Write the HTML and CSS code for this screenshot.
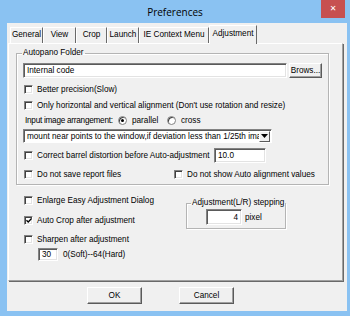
FILE: index.html
```html
<!DOCTYPE html>
<html>
<head>
<meta charset="utf-8">
<title>Preferences</title>
<link rel="stylesheet" href="styles.css">
</head>
<body>
<div class="window">
  <div class="titlebar">
    <span></span>
    <span class="title">Preferences</span>
    <span class="close">✕</span>
  </div>
  <div class="client">
    <div class="tabs">
      <div class="tab t-general">General</div>
      <div class="tab t-view">View</div>
      <div class="tab t-crop">Crop</div>
      <div class="tab t-launch">Launch</div>
      <div class="tab t-ie">IE Context Menu</div>
      <div class="tab t-adj active">Adjustment</div>
    </div>
    <div class="panel">
      <fieldset class="group main-group">
        <legend>Autopano Folder</legend>
        <div class="row row-input">
          <div class="field folder">Internal code</div>
          <div class="btn browse">Brows...</div>
        </div>
        <div class="row cb first"><span class="box"></span>Better precision(Slow)</div>
        <div class="row cb"><span class="box"></span>Only horizontal and vertical alignment (Don't use rotation and resize)</div>
        <div class="row radio-row">
          <span class="radio-label">Input image arrangement:</span>
          <span class="opt opt-parallel"><span class="radio on"></span>parallel</span>
          <span class="opt"><span class="radio"></span>cross</span>
        </div>
        <div class="row combo">
          <span class="combo-text">mount near points to the window,if deviation less than 1/25th image</span>
          <span class="combo-btn"><svg width="7" height="4" viewBox="0 0 7 4"><path d="M0 0H7L3.5 4Z" fill="#000"/></svg></span>
        </div>
        <div class="row barrel">
          <span class="cb-inline w-barrel"><span class="box"></span>Correct barrel distortion before Auto-adjustment</span>
          <div class="field small-field">10.0</div>
        </div>
        <div class="row cb-pair">
          <span class="cb-inline w-save"><span class="box"></span>Do not save report files</span>
          <span class="cb-inline"><span class="box"></span>Do not show Auto alignment values</span>
        </div>
      </fieldset>
      <div class="lower">
        <div class="left-col">
          <div class="row cb tall"><span class="box"></span>Enlarge Easy Adjustment Dialog</div>
          <div class="row cb tall"><span class="box checked"><svg width="7" height="7" viewBox="0 0 7 7"><path d="M0.5 3.2L2.6 5.3L6.5 1" fill="none" stroke="#000" stroke-width="1.6"/></svg></span>Auto Crop after adjustment</div>
          <div class="row cb mid"><span class="box"></span>Sharpen after adjustment</div>
          <div class="row sharp-row">
            <div class="field tiny-field">30</div>
            <span class="hint">0(Soft)--64(Hard)</span>
          </div>
        </div>
        <fieldset class="group step-group">
          <legend>Adjustment(L/R) stepping</legend>
          <div class="row step-row">
            <div class="field step-field">4</div>
            <span class="unit">pixel</span>
          </div>
        </fieldset>
      </div>
    </div>
    <div class="buttons">
      <div class="btn dlg">OK</div>
      <div class="btn dlg">Cancel</div>
    </div>
  </div>
</div>
</body>
</html>
```
FILE: styles.css
```css
* { box-sizing: border-box; }
html, body { margin: 0; padding: 0; }
body {
  width: 350px;
  height: 316px;
  overflow: hidden;
  font-family: "Liberation Sans", Arial, sans-serif;
  font-size: 8.2px;
  color: #000;
}
.window {
  width: 350px;
  height: 316px;
  background: #8ac2f2;
  display: flex;
  flex-direction: column;
}
.titlebar {
  height: 23px;
  display: grid;
  grid-template-columns: 1fr auto 1fr;
  align-items: center;
}
.title {
  font-family: "Open Sans", sans-serif;
  font-size: 10px;
  line-height: 14px;
  color: #000;
}
.close {
  justify-self: end;
  align-self: start;
  width: 24px;
  height: 18px;
  margin-right: 5px;
  background: #c75050;
  color: #fff;
  font-family: "DejaVu Sans", sans-serif;
  font-size: 8px;
  font-weight: bold;
  line-height: 18px;
  text-align: center;
}
.client {
  flex: 1;
  margin: 0 3px 5px 7px;
  background: #f0f0f0;
  padding: 2px 0 0 1px;
  display: flex;
  flex-direction: column;
}
.tabs {
  display: flex;
  align-items: flex-end;
  height: 18px;
  margin-left: 2px;
  position: relative;
  z-index: 1;
}
.tab {
  height: 16px;
  line-height: 14px;
  text-align: center;
  border-top: 1px solid #fff;
  border-left: 1px solid #fff;
  border-right: 1px solid #696969;
  white-space: nowrap;
}
.t-general { width: 33px; }
.t-view { width: 33px; }
.t-crop { width: 31px; }
.t-launch { width: 32px; }
.t-ie { width: 70px; }
.t-adj { width: 48px; }
.tab.active {
  height: 19px;
  margin-bottom: -1px;
  background: #f0f0f0;
  line-height: 16px;
}
.panel {
  width: 335px;
  height: 238px;
  border: 1px solid;
  border-color: #fff #a0a0a0 #a0a0a0 #fff;
  box-shadow: 1px 1px 0 #696969;
  padding: 4px 0 0 7px;
  position: relative;
}
.group {
  margin: 0;
  min-width: 0;
  border: 1px solid #b4b4b4;
  box-shadow: inset 1px 1px 0 #fff, 1px 1px 0 #fff;
}
.group legend {
  padding: 0 1px;
  margin-left: -1px;
  line-height: 10px;
  font-size: 8.2px;
  white-space: nowrap;
}
.main-group {
  width: 313px;
  height: 137px;
  padding: 0 5px 0 6px;
  display: flex;
  flex-direction: column;
}
.row {
  display: flex;
  align-items: center;
  white-space: nowrap;
}
.row-input {
  height: 15px;
  margin-top: 5px;
}
.field {
  background: #fff;
  border: 1px solid;
  border-color: #828282 #fff #fff #828282;
  box-shadow: inset 1px 1px 0 #5a5a5a, inset -1px -1px 0 #e3e3e3;
  padding-left: 3px;
  display: flex;
  align-items: center;
}
.folder {
  width: 264px;
  height: 15px;
  margin-right: 2px;
}
.btn {
  background: #f0f0f0;
  border: 1px solid;
  border-color: #fff #5a5a5a #5a5a5a #fff;
  box-shadow: inset -1px -1px 0 #a0a0a0;
  display: flex;
  align-items: center;
  justify-content: center;
}
.browse {
  width: 33px;
  height: 15px;
}
.box {
  width: 9px;
  height: 9px;
  flex: none;
  background: #fff;
  border: 1px solid;
  border-color: #828282 #fff #fff #828282;
  box-shadow: inset 1px 1px 0 #404040, inset -1px -1px 0 #e3e3e3;
  margin: 0 4px 0 1px;
  display: flex;
  align-items: center;
  justify-content: center;
}
.box svg { display: block; margin: 0 0 0 1px; }
.cb { height: 16px; }
.cb.first { margin-top: 3px; }
.radio-row { height: 15px; }
.radio-label {
  width: 95px;
  padding-left: 2px;
  letter-spacing: -0.25px;
}
.opt {
  display: flex;
  align-items: center;
}
.opt-parallel { width: 49px; }
.radio {
  width: 9px;
  height: 9px;
  border-radius: 50%;
  background: #fff;
  border: 1px solid #828282;
  box-shadow: inset 1px 1px 0 #404040;
  margin-right: 5px;
  display: flex;
  align-items: center;
  justify-content: center;
}
.radio.on::after {
  content: "";
  width: 3px;
  height: 3px;
  border-radius: 50%;
  background: #000;
}
.combo {
  width: 249px;
  height: 14px;
  margin-top: 1px;
  background: #fff;
  border: 1px solid;
  border-color: #828282 #fff #fff #828282;
  box-shadow: inset 1px 1px 0 #5a5a5a;
  padding: 1px 1px 1px 2px;
}
.combo-text {
  flex: 1;
  overflow: hidden;
  padding-left: 1px;
}
.combo-btn {
  width: 11px;
  height: 11px;
  flex: none;
  background: #f0f0f0;
  border: 1px solid;
  border-color: #fff #5a5a5a #5a5a5a #fff;
  display: flex;
  align-items: center;
  justify-content: center;
}
.combo-btn svg { display: block; }
.barrel {
  height: 15px;
  margin-top: 5px;
}
.cb-inline {
  display: flex;
  align-items: center;
}
.w-barrel { width: 191px; }
.small-field {
  width: 52px;
  height: 15px;
}
.cb-pair {
  height: 16px;
  margin-top: 3px;
}
.w-save { width: 150px; }
.lower {
  display: flex;
  margin-top: 5px;
}
.left-col {
  width: 170px;
  padding-left: 7px;
  display: flex;
  flex-direction: column;
}
.cb.tall { height: 20px; }
.cb.mid { height: 18px; }
.sharp-row { height: 13px; }
.tiny-field {
  width: 20px;
  height: 13px;
  margin-left: 15px;
  margin-right: 5px;
}
.step-group {
  width: 100px;
  height: 31px;
  margin-top: 8px;
  padding: 0 3px 0 5px;
}
.step-row {
  margin-top: 1px;
  height: 16px;
}
.step-field {
  width: 36px;
  height: 16px;
  margin-left: 14px;
  margin-right: 3px;
  justify-content: flex-end;
  padding-right: 3px;
}
.buttons {
  display: flex;
  gap: 37px;
  margin-top: 6px;
  margin-left: 79px;
}
.dlg {
  width: 55px;
  height: 17px;
}
```
